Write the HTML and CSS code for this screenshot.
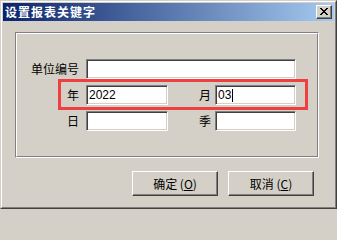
FILE: index.html
```html
<!DOCTYPE html>
<html lang="zh">
<head>
<meta charset="utf-8">
<title>设置报表关键字</title>
<link rel="stylesheet" href="styles.css">
</head>
<body>
<div class="window">
  <div class="window-inner">
    <div class="titlebar">
      <span class="title">设置报表关键字</span>
      <button class="close" type="button" aria-label="关闭">
        <svg width="8" height="7" viewBox="0 0 8 7"><path d="M0 0h2v1h-2zM6 0h2v1h-2zM1 1h2v1h-2zM5 1h2v1h-2zM2 2h4v1h-4zM3 3h2v1h-2zM2 4h4v1h-4zM1 5h2v1h-2zM5 5h2v1h-2zM0 6h2v1h-2zM6 6h2v1h-2z" fill="#000"/></svg>
      </button>
    </div>
    <div class="client">
      <div class="group">
        <div class="group-inner">
          <div class="row">
            <label class="lbl lbl-first">单位编号</label>
            <div class="field field-wide"></div>
          </div>
          <div class="row">
            <label class="lbl lbl-first">年</label>
            <div class="field field-short">2022</div>
            <label class="lbl lbl-second">月</label>
            <div class="field field-short2">03<span class="caret"></span></div>
          </div>
          <div class="row">
            <label class="lbl lbl-first">日</label>
            <div class="field field-short"></div>
            <label class="lbl lbl-second">季</label>
            <div class="field field-short2"></div>
          </div>
          <div class="highlight"></div>
        </div>
      </div>
      <div class="buttons">
        <button class="btn" type="button">确定 (<u>O</u>)</button>
        <button class="btn" type="button">取消 (<u>C</u>)</button>
      </div>
    </div>
  </div>
</div>
</body>
</html>
```
FILE: styles.css
```css
html, body {
  margin: 0;
  padding: 0;
  background: #d4d0c8;
}
body {
  width: 337px;
  height: 209px;
  overflow: hidden;
  font-family: "Noto Sans CJK SC", "Liberation Sans", sans-serif;
}
.window {
  box-sizing: border-box;
  width: 337px;
  height: 209px;
  border-top: 1px solid #d4d0c8;
  border-left: 1px solid #d4d0c8;
  border-right: 1px solid #404040;
  border-bottom: 1px solid #404040;
  background: #d4d0c8;
}
.window-inner {
  box-sizing: border-box;
  height: 100%;
  border-top: 1px solid #ffffff;
  border-left: 1px solid #ffffff;
  border-right: 1px solid #808080;
  border-bottom: 1px solid #808080;
  padding: 1px;
}
.titlebar {
  height: 18px;
  background: linear-gradient(to right, #0a246a, #a6caf0);
  display: flex;
  align-items: center;
  justify-content: space-between;
  padding: 0 2px 0 2px;
}
.title {
  color: #ffffff;
  font-weight: bold;
  font-size: 12px;
  letter-spacing: 1px;
  line-height: 18px;
}
.close {
  box-sizing: border-box;
  width: 16px;
  height: 14px;
  padding: 0;
  margin: 0;
  background: #d4d0c8;
  border-top: 1px solid #ffffff;
  border-left: 1px solid #ffffff;
  border-right: 1px solid #404040;
  border-bottom: 1px solid #404040;
  box-shadow: inset -1px -1px 0 #808080;
  display: flex;
  align-items: center;
  justify-content: center;
}
.close svg {
  display: block;
  margin-left: -1px;
  margin-top: -1px;
}
.client {
  padding: 11px 0 0 12px;
}
.group {
  box-sizing: border-box;
  width: 304px;
  height: 126px;
  border-top: 1px solid #808080;
  border-left: 1px solid #808080;
  border-right: 1px solid #ffffff;
  border-bottom: 1px solid #ffffff;
}
.group-inner {
  position: relative;
  box-sizing: border-box;
  height: 100%;
  border-top: 1px solid #ffffff;
  border-left: 1px solid #ffffff;
  border-right: 1px solid #808080;
  border-bottom: 1px solid #808080;
  padding-top: 25px;
  display: flex;
  flex-direction: column;
  gap: 6px;
}
.row {
  display: flex;
  align-items: center;
  height: 20px;
}
.lbl {
  font-size: 12px;
  color: #000;
  text-align: right;
  line-height: 14px;
}
.lbl-first {
  width: 62px;
  margin-right: 7px;
}
.lbl-second {
  width: 43px;
  margin-right: 4px;
}
.field {
  box-sizing: border-box;
  height: 20px;
  background: #ffffff;
  border-top: 1px solid #808080;
  border-left: 1px solid #808080;
  border-right: 1px solid #ffffff;
  border-bottom: 1px solid #ffffff;
  box-shadow: inset 1px 1px 0 #404040, inset -1px -1px 0 #d4d0c8;
  font-family: "Liberation Sans", Arial, sans-serif;
  font-size: 12px;
  line-height: 18px;
  padding-left: 2px;
  color: #000;
  display: flex;
  align-items: center;
}
.field-wide { width: 210px; }
.field-short { width: 82px; }
.field-short2 { width: 81px; }
.caret {
  display: inline-block;
  width: 1px;
  height: 13px;
  background: #000;
  margin-left: 1px;
}
.highlight {
  position: absolute;
  left: 41px;
  top: 45px;
  width: 250px;
  height: 31px;
  box-sizing: border-box;
  border: 3px solid #ef4040;
  pointer-events: none;
}
.buttons {
  display: flex;
  justify-content: flex-end;
  gap: 10px;
  margin-top: 13px;
  padding-right: 20px;
}
.btn {
  box-sizing: border-box;
  width: 86px;
  height: 25px;
  margin: 0;
  padding: 0;
  background: #d4d0c8;
  border-top: 1px solid #ffffff;
  border-left: 1px solid #ffffff;
  border-right: 1px solid #404040;
  border-bottom: 1px solid #404040;
  box-shadow: inset -1px -1px 0 #808080;
  font-family: "Noto Sans CJK SC", "Liberation Sans", sans-serif;
  font-size: 12px;
  color: #000;
  line-height: 14px;
}
.btn u {
  text-underline-offset: 1px;
}
```
